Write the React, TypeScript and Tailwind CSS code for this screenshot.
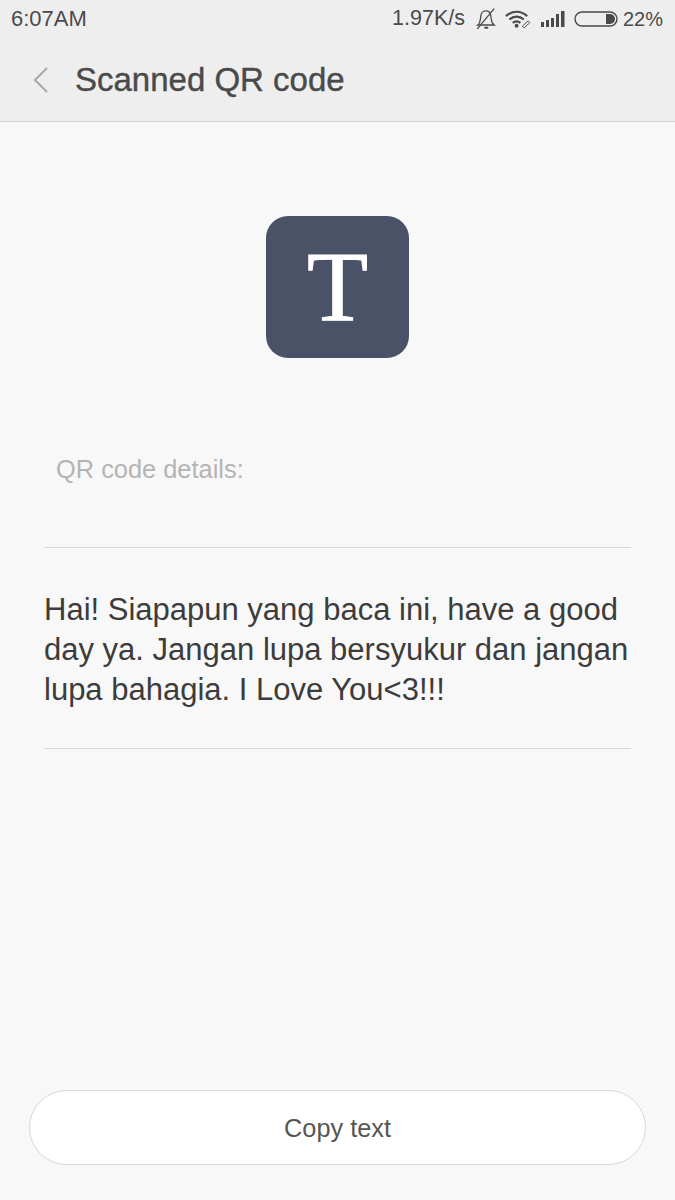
export default function App() {
  return (
    <div className="w-[675px] h-[1200px] overflow-hidden flex flex-col bg-[#f8f8f8] font-['Liberation_Sans',Arial,sans-serif]">
      <header className="h-[122px] shrink-0 bg-[#eeeeee] border-b border-[#d4d4d4] flex flex-col">
        <div className="h-[38px] pl-[11px] pr-[12px] flex items-center justify-between text-[#4a4a4a] text-[20px] leading-none">
          <span className="text-[22px]">6:07AM</span>
          <div className="flex items-center">
            <span className="text-[21.500px]">1.97K/s</span>
            <svg className="ml-[9px]" width="24" height="24" viewBox="0 0 22 22" fill="none" stroke="#4a4a4a" strokeWidth="1.200">
              <path d="M3.500 16.500h15c-2-1.500-2.500-3-2.700-5.500l-.4-3C15 5 13 3.500 11 3.500 8 3.500 6.500 6 6.300 8l-.5 3.500C5.600 13.500 5 15.500 3.500 16.500z" />
              <path d="M3 20 18.500 1.500" />
              <path d="M9.500 19h3.500" strokeWidth="1.800" />
            </svg>
            <svg className="ml-[7px]" width="27" height="20" viewBox="0 0 28 20" fill="none" stroke="#4a4a4a" strokeWidth="2.200">
              <path d="M1 7c6.500-6 15.500-6 22 0" />
              <path d="M4.500 10.500c4.500-4 10.500-4 15 0" />
              <path d="M8 14c2.500-2 5.500-2 8 0" />
              <circle cx="12" cy="17" r="2" fill="#4a4a4a" stroke="none" />
              <path d="M18 17.500 24 12l1.800 1.800-6 5.500z" strokeWidth="1" />
            </svg>
            <svg className="ml-[9px]" width="24" height="18" viewBox="0 0 24 18" fill="#4a4a4a">
              <rect x="0" y="12" width="3" height="5" />
              <rect x="5" y="10" width="3" height="7" />
              <rect x="10" y="8" width="3" height="9" />
              <rect x="15" y="4" width="3" height="13" />
              <rect x="20" y="1" width="3.500" height="16" />
            </svg>
            <svg className="ml-[9px]" width="44" height="18" viewBox="0 0 44 18" fill="none">
              <rect x="1" y="2" width="42" height="14" rx="7" stroke="#4a4a4a" strokeWidth="1.400" />
              <path d="M32 4h4a5 5 0 0 1 0 10h-4z" fill="#4a4a4a" />
            </svg>
            <span className="ml-[5px]">22%</span>
          </div>
        </div>
        <div className="flex-1 flex items-center">
          <svg className="ml-[32px]" width="18" height="28" viewBox="0 0 18 28" fill="none" stroke="#a8a8a8" strokeWidth="2">
            <path d="M15 2 3 14l12 12" />
          </svg>
          <h1 className="ml-[25px] text-[33px] leading-none text-[#4a4a4a] [-webkit-text-stroke:0.4px_#4a4a4a]">Scanned QR code</h1>
        </div>
      </header>

      <main className="flex-1 flex flex-col">
        <div className="mt-[94px] self-center w-[143px] h-[142px] rounded-[22px] bg-[#4a5268] flex items-center justify-center">
          <span className="text-white text-[100px] leading-none font-['Liberation_Serif',serif] [-webkit-text-stroke:1px_white]">T</span>
        </div>
        <p className="mt-[96px] ml-[56px] text-[25.400px] leading-[30px] text-[#b4b4b4]">QR code details:</p>
        <div className="mt-[63px] mx-[44px] border-y border-[#d8d8d8] h-[202px] pt-[42px]">
          <p className="text-[31px] leading-[40px] text-[#3c3c3c] whitespace-nowrap">
            Hai! Siapapun yang baca ini, have a good<br />
            day ya. Jangan lupa bersyukur dan jangan<br />
            lupa bahagia. I Love You&lt;3!!!
          </p>
        </div>
        <div className="mt-auto mb-[35px] mx-[29px] h-[75px] rounded-full bg-white border border-[#d8d8d8] flex items-center justify-center">
          <span className="text-[25.300px] text-[#555555] relative top-px">Copy text</span>
        </div>
      </main>
    </div>
  );
}
